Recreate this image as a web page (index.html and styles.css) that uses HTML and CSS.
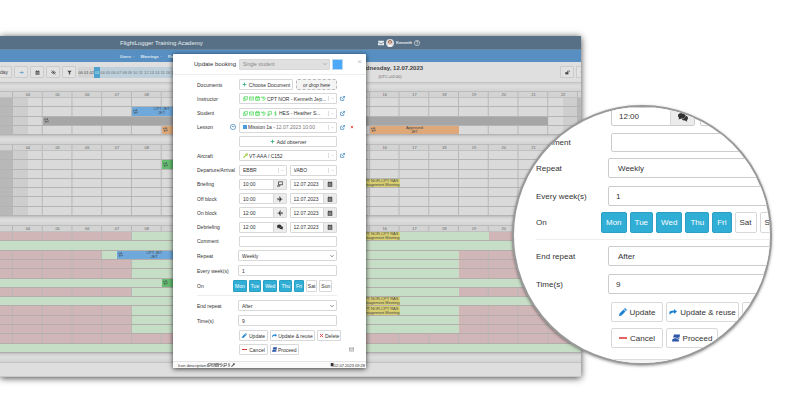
FILE: index.html
```html
<!DOCTYPE html>
<html lang="en">
<head>
    <meta charset="UTF-8">
    <meta name="viewport" content="width=device-width, initial-scale=1.0">
    <title>FlightLogger Training Academy</title>
    <link rel="stylesheet" href="styles.css">
</head>
<body>
    <!-- Icon set -->
    <svg class="icon-set" aria-hidden="true">
        <symbol id="mail" viewBox="0 0 16 16"><path d="M1 3h14v10H1zM1 4l7 5 7-5" fill="none" stroke="currentColor" stroke-width="1.8"/></symbol>
        <symbol id="mail-solid" viewBox="0 0 16 16"><path d="M0 2h16v2L8 10 0 4zM0 6l8 6 8-6v8H0z" fill="currentColor"/></symbol>
        <symbol id="help" viewBox="0 0 16 16"><circle cx="8" cy="8" r="7" fill="none" stroke="currentColor" stroke-width="1.5"/><path d="M5.500 6a2.500 2.500 0 1 1 3.500 2.300q-1 .5-1 1.700M8 11v1.800" fill="none" stroke="currentColor" stroke-width="1.6"/></symbol>
        <symbol id="arrow" viewBox="0 0 16 16"><path d="M2 8h11M9 4l4 4-4 4" fill="none" stroke="currentColor" stroke-width="2"/></symbol>
        <symbol id="calendar" viewBox="0 0 16 16"><path d="M2 3h2V1h2v2h4V1h2v2h2v12H2z" fill="currentColor"/><path d="M3 6.500h10M3 9.500h10M3 12.500h10M6 6v8M10 6v8" stroke="#eee" stroke-width=".8"/></symbol>
        <symbol id="cal-line" viewBox="0 0 16 16"><path d="M2 3h12v11H2zM2 5.500h12M5 1v3M11 1v3M5 10h6" fill="none" stroke="currentColor" stroke-width="2"/></symbol>
        <symbol id="eye" viewBox="0 0 16 16"><path d="M1 8q7-9 14 0-7 9-14 0zM2 1l12 14" fill="none" stroke="currentColor" stroke-width="1.800"/><circle cx="8" cy="8" r="2.500" fill="currentColor"/></symbol>
        <symbol id="filter" viewBox="0 0 16 16"><path d="M1 2h14L10 8v7l-4-2V8z" fill="currentColor"/></symbol>
        <symbol id="chevron" viewBox="0 0 16 16"><path d="M2 5l6 6 6-6" fill="none" stroke="currentColor" stroke-width="2.500"/></symbol>
        <symbol id="repeat-icon" viewBox="0 0 16 16"><path d="M2 8V4h10M9 1l4 3-4 3M14 8v4H4M7 9l-4 3 4 3" fill="none" stroke="currentColor" stroke-width="1.800"/></symbol>
        <symbol id="plus" viewBox="0 0 16 16"><path d="M8 2v12M2 8h12" stroke="currentColor" stroke-width="2.600"/></symbol>
        <symbol id="minus" viewBox="0 0 16 16"><path d="M0 8h16" stroke="currentColor" stroke-width="3"/></symbol>
        <symbol id="cross" viewBox="0 0 16 16"><path d="M3 3l10 10M13 3L3 13" stroke="currentColor" stroke-width="2.800"/></symbol>
        <symbol id="copy" viewBox="0 0 16 16"><path d="M5 2h10v8H5zM5 6H1v8h9v-3" fill="none" stroke="currentColor" stroke-width="1.900"/></symbol>
        <symbol id="history" viewBox="0 0 16 16"><path d="M2 2v4h5M3 6q3-5 8-3 5 3 2 8-3 5-9 2M8 5v4h3" fill="none" stroke="currentColor" stroke-width="1.800"/></symbol>
        <symbol id="board" viewBox="0 0 16 16"><path d="M4 2h11v8H4zM1 14l3-4M1 14h6l1-4" fill="none" stroke="currentColor" stroke-width="1.900"/></symbol>
        <symbol id="dollar" viewBox="0 0 16 16"><path d="M11 4q-6-3-6 1 0 2 3 3t3 3q0 4-6 1M8 1v14" fill="none" stroke="currentColor" stroke-width="1.600"/></symbol>
        <symbol id="open" viewBox="0 0 16 16"><path d="M7 4H2v10h10V9M9 1h6v6M15 1L7 9" fill="none" stroke="currentColor" stroke-width="2"/></symbol>
        <symbol id="clock" viewBox="0 0 16 16"><circle cx="8" cy="8" r="7" fill="none" stroke="currentColor" stroke-width="1.600"/><path d="M8 8L5 5M8 8l4-2" stroke="currentColor" stroke-width="1.600"/></symbol>
        <symbol id="key" viewBox="0 0 16 16"><path d="M15 2q-4-3-7 1-1 2 0 4l-7 6v2h4v-2h2v-2l3-2q4 0 5-3 1-2 0-4zm-3 1a1.500 1.500 0 1 1 0 3 1.500 1.500 0 0 1 0-3z" fill="currentColor"/></symbol>
        <symbol id="plane" viewBox="0 0 16 16"><path d="M7 7L6 1h2l3 6h3q2 1 0 2h-3l-3 6H6l1-6H4l-1 2H1l1-3-1-3h2l1 2z" fill="currentColor"/></symbol>
        <symbol id="chat" viewBox="0 0 16 16"><ellipse cx="6" cy="6" rx="6" ry="4.500" fill="currentColor"/><path d="M2 8l-1 4 5-2zM12.500 5.500q4 2 3.500 5-.5 2-2 2.500l1 2.500-4-2q-4 0-5-2.500 6 0 6.500-5.500z" fill="currentColor"/></symbol>
        <symbol id="pencil" viewBox="0 0 16 16"><path d="M1 11l8-8 4 4-8 8-5 1zM10 2l2-2 4 4-2 2z" fill="currentColor"/></symbol>
        <symbol id="share" viewBox="0 0 16 16"><path d="M10 2l6 5-6 5V9Q3 8 2 14-3 5 10 5z" fill="currentColor"/></symbol>
        <symbol id="proceed" viewBox="0 0 16 16"><path d="M4 1h12l-1.500 9-4 1 4 1-1 3H0l1-5 5-2-4-1z" fill="#2c56a8"/><path d="M1 9q5-3 7-1t7-1" fill="none" stroke="#fff" stroke-width="1.300"/></symbol>
        <symbol id="unlock" viewBox="0 0 16 16"><path d="M1 7h10v7H1z" fill="currentColor"/><path d="M8 8V3h6v4" fill="none" stroke="currentColor" stroke-width="2"/></symbol>
        <symbol id="book" viewBox="0 0 16 16"><path d="M3 0h11v16l-4-3H3z" fill="currentColor"/></symbol>
    </svg>

    <main class="app">
        <header class="topbar">
            <span class="brand">FlightLogger Training Academy</span>
            <div class="account">
                <svg class="icon mail"><use href="#mail-solid"/></svg>
                <svg class="avatar" viewBox="0 0 16 16"><circle cx="8" cy="8" r="8" fill="#d8dadb"/><path d="M4 5q4-6 8 0v3H4z" fill="#75523f"/><ellipse cx="8" cy="7" rx="3" ry="4" fill="#d9a78c"/><path d="M3 14q5-6 10 0-5 4-10 0z" fill="#f8f8f8"/></svg>
                <span>Kenneth</span>
                <svg class="icon help"><use href="#help"/></svg>
            </div>
        </header>
        <nav class="nav">
            <a href="#">Users <small>·</small></a>
            <a href="#">Warnings <small>·</small></a>
            <a href="#">Reports</a>
        </nav>

        <div class="toolbar">
            <button class="tool today">Today</button>
            <button class="tool next" aria-label="Next day"><svg class="icon"><use href="#arrow"/></svg></button>
            <button class="tool" aria-label="Calendar"><svg class="icon"><use href="#calendar"/></svg></button>
            <button class="tool" aria-label="Visibility"><svg class="icon"><use href="#eye"/></svg></button>
            <button class="tool" aria-label="Filter"><svg class="icon"><use href="#filter"/></svg></button>
            <div class="hours">
                <span class="off">00</span><span class="off">01</span><span class="off">02</span><span class="active">03</span><span>04</span><span>05</span><span>06</span><span>07</span><span>08</span><span>09</span><span>10</span><span>11</span><span>12</span><span>13</span><span>14</span><span>15</span><span>16</span><span>17</span><span>18</span><span>19</span><span>20</span><span>21</span><span>22</span><span>23</span>
            </div>
            <div class="date"><strong>Wednesday, 12.07.2023</strong><span>(UTC+02:00)</span></div>
            <button class="tool lock" aria-label="Unlock"><svg class="icon"><use href="#unlock"/></svg></button>
            <button class="tool cut" aria-label="More"><svg class="icon"><use href="#book"/></svg></button>
        </div>

        <div class="strip"></div>
        <section class="board plain bookings">
            <div class="line head"><i></i><b>04</b><b>05</b><b>06</b><b>07</b><b>08</b><b>09</b><b>10</b><b>11</b><b>12</b><b>13</b><b>14</b><b>15</b><b>16</b><b>17</b><b>18</b><b>19</b><b>20</b><b>21</b><b>22</b></div>
            <div class="line"></div>
            <div class="line"><div class="event blue from-8 to-10"><svg class="icon"><use href="#repeat-icon"/></svg><span>CPT JET<br>JET</span></div></div>
            <div class="line"><div class="event gray from-5 to-22"><svg class="icon"><use href="#repeat-icon"/></svg></div></div>
            <div class="line">
                <div class="event orange from-9 to-11"><svg class="icon"><use href="#repeat-icon"/></svg></div>
                <div class="event orange from-16 to-19"><svg class="icon"><use href="#repeat-icon"/></svg><span>Approved<br>JET</span></div>
            </div>
        </section>

        <div class="strip"></div>
        <section class="board plain students">
            <div class="line head"><i></i><b>04</b><b>05</b><b>06</b><b>07</b><b>08</b><b>09</b><b>10</b><b>11</b><b>12</b><b>13</b><b>14</b><b>15</b><b>16</b><b>17</b><b>18</b><b>19</b><b>20</b><b>21</b><b>22</b></div>
            <div class="line"></div>
            <div class="line"><div class="event green from-9 to-10"><svg class="icon"><use href="#repeat-icon"/></svg><span>JET</span></div></div>
            <div class="line"></div>
            <div class="line"><div class="event yellow from-15 to-17"><span>CPT NOR,CPT RAS<br>Management Meeting</span></div></div>
            <div class="line"></div>
            <div class="line"></div>
            <div class="line"></div>
        </section>

        <div class="strip"></div>
        <section class="board duty">
            <div class="line head"><i></i><b>04</b><b>05</b><b>06</b><b>07</b><b>08</b><b>09</b><b>10</b><b>11</b><b>12</b><b>13</b><b>14</b><b>15</b><b>16</b><b>17</b><b>18</b><b>19</b><b>20</b><b>21</b><b>22</b></div>
            <div class="line"><div class="free from-8 to-20"></div><div class="event yellow from-15 to-17"><span>CPT NOR,CPT RAS<br>Management Meeting</span></div></div>
            <div class="line"><div class="free all"></div></div>
            <div class="line"><div class="free from-7 to-19"></div><div class="event blue from-730 to-10"><svg class="icon"><use href="#repeat-icon"/></svg><span>CPT JET<br>JET</span></div></div>
            <div class="line"><div class="free from-8 to-19"></div></div>
            <div class="line"><div class="free from-8 to-19"></div></div>
            <div class="line"><div class="free all"></div><div class="event green from-9 to-10"><svg class="icon"><use href="#repeat-icon"/></svg><span>JET</span></div></div>
            <div class="line"><div class="free from-8 to-19"></div></div>
            <div class="line"><div class="free all"></div><div class="event yellow from-15 to-17"><span>CPT NOR,CPT RAS<br>Management Meeting</span></div></div>
            <div class="line"><div class="free from-8 to-19"></div><div class="event yellow from-15 to-17"><span>CPT NOR,CPT RAS<br>Management Meeting</span></div></div>
            <div class="line"><div class="free from-8 to-19"></div></div>
            <div class="line"><div class="free from-8 to-19"></div></div>
            <div class="line"></div>
            <div class="line"><div class="free all"></div></div>
        </section>
        <div class="strip"></div>
        <div class="app-foot"></div>

        <!-- Booking dialog -->
        <form class="dialog">
            <div class="dialog-head">
                <label for="kind">Update booking</label>
                <div class="field muted"><select id="kind"><option>Single student</option></select><svg class="icon"><use href="#chevron"/></svg></div>
                <button type="button" class="swatch" aria-label="Colour"></button>
                <button type="button" class="close" aria-label="Close">×</button>
            </div>

            <div class="rows">
                <div class="row">
                    <label for="doc">Documents</label>
                    <div class="control">
                        <button type="button" id="doc" class="btn choose"><svg class="icon teal"><use href="#plus"/></svg>Choose Document</button>
                        <div class="drop">or drop here</div>
                    </div>
                </div>
                <div class="row">
                    <label for="instructor">Instructor</label>
                    <div class="control"><div class="field combo">
                        <svg class="icon lime"><use href="#copy"/></svg><svg class="icon lime"><use href="#mail"/></svg><svg class="icon lime"><use href="#cal-line"/></svg><svg class="icon lime"><use href="#history"/></svg>
                        <select id="instructor"><option>CPT NOR - Kenneth Jep...</option></select><svg class="icon arrow"><use href="#chevron"/></svg>
                    </div></div>
                    <a href="#" aria-label="Open instructor"><svg class="icon"><use href="#open"/></svg></a>
                </div>
                <div class="row">
                    <label for="student">Student</label>
                    <div class="control"><div class="field combo">
                        <svg class="icon lime"><use href="#copy"/></svg><svg class="icon lime"><use href="#mail"/></svg><svg class="icon lime"><use href="#cal-line"/></svg><svg class="icon lime"><use href="#history"/></svg><svg class="icon lime"><use href="#board"/></svg><svg class="icon lime"><use href="#dollar"/></svg>
                        <select id="student"><option>HES - Heather S...</option></select><svg class="icon arrow"><use href="#chevron"/></svg>
                    </div></div>
                    <a href="#" aria-label="Open student"><svg class="icon"><use href="#open"/></svg></a>
                </div>
                <div class="row">
                    <label for="lesson" class="timed">Lesson <svg class="icon"><use href="#clock"/></svg></label>
                    <div class="control"><div class="field combo lesson">
                        <span class="dot"></span><select id="lesson"><option>Mission 1a -</option></select><span class="when">12.07.2023 10:00</span><svg class="icon arrow"><use href="#chevron"/></svg>
                    </div></div>
                    <a href="#" aria-label="Open lesson"><svg class="icon"><use href="#open"/></svg></a>
                    <button type="button" class="remove" aria-label="Remove lesson"><svg class="icon"><use href="#cross"/></svg></button>
                </div>
                <div class="row">
                    <span></span>
                    <div class="control"><button type="button" class="btn wide"><svg class="icon teal"><use href="#plus"/></svg>Add observer</button></div>
                </div>
                <div class="row">
                    <label for="aircraft">Aircraft</label>
                    <div class="control"><div class="field combo">
                        <svg class="icon olive"><use href="#key"/></svg><select id="aircraft"><option>VT-AAA / C152</option></select><svg class="icon arrow"><use href="#chevron"/></svg>
                    </div></div>
                    <a href="#" aria-label="Open aircraft"><svg class="icon"><use href="#open"/></svg></a>
                </div>
                <div class="row">
                    <label for="departure">Departure/Arrival</label>
                    <div class="control">
                        <div class="field combo"><select id="departure"><option>EBBR</option></select><svg class="icon arrow"><use href="#chevron"/></svg></div>
                        <div class="field combo"><select aria-label="Arrival"><option>VABO</option></select><svg class="icon arrow"><use href="#chevron"/></svg></div>
                    </div>
                </div>
                <div class="row">
                    <label for="briefing">Briefing</label>
                    <div class="control">
                        <div class="field"><input id="briefing" value="10:00"><span class="addon"><svg class="icon"><use href="#board"/></svg></span></div>
                        <div class="field"><input aria-label="Briefing date" value="12.07.2023"><span class="addon"><svg class="icon"><use href="#calendar"/></svg></span></div>
                    </div>
                </div>
                <div class="row">
                    <label for="offblock">Off block</label>
                    <div class="control">
                        <div class="field"><input id="offblock" value="10:00"><span class="addon"><svg class="icon"><use href="#plane"/></svg></span></div>
                        <div class="field"><input aria-label="Off block date" value="12.07.2023"><span class="addon"><svg class="icon"><use href="#calendar"/></svg></span></div>
                    </div>
                </div>
                <div class="row">
                    <label for="onblock">On block</label>
                    <div class="control">
                        <div class="field"><input id="onblock" value="12:00"><span class="addon"><svg class="icon flip"><use href="#plane"/></svg></span></div>
                        <div class="field"><input aria-label="On block date" value="12.07.2023"><span class="addon"><svg class="icon"><use href="#calendar"/></svg></span></div>
                    </div>
                </div>
                <div class="row">
                    <label for="debriefing">Debriefing</label>
                    <div class="control">
                        <div class="field"><input id="debriefing" value="12:00"><span class="addon"><svg class="icon"><use href="#chat"/></svg></span></div>
                        <div class="field"><input aria-label="Debriefing date" value="12.07.2023"><span class="addon"><svg class="icon"><use href="#calendar"/></svg></span></div>
                    </div>
                </div>
                <div class="row">
                    <label for="comment">Comment</label>
                    <div class="control"><div class="field"><input id="comment"></div></div>
                </div>
            </div>

            <div class="repeat">
                <div class="row"><label for="repeat">Repeat</label><div class="field"><select id="repeat"><option>Weekly</option></select><svg class="icon"><use href="#chevron"/></svg></div></div>
                <div class="row"><label for="every">Every week(s)</label><div class="field"><input id="every" value="1"></div></div>
                <div class="row days-row"><span>On</span>
                    <div class="days"><button type="button" class="on">Mon</button><button type="button" class="on">Tue</button><button type="button" class="on">Wed</button><button type="button" class="on">Thu</button><button type="button" class="on">Fri</button><button type="button">Sat</button><button type="button">Sun</button></div>
                </div>
                <hr>
                <div class="row"><label for="end">End repeat</label><div class="field"><select id="end"><option>After</option></select><svg class="icon"><use href="#chevron"/></svg></div></div>
                <div class="row"><label for="times">Time(s)</label><div class="field"><input id="times" value="9"></div></div>
            </div>

            <div class="actions">
                <button type="button" class="btn"><svg class="icon azure"><use href="#pencil"/></svg>Update</button>
                <button type="button" class="btn"><svg class="icon azure"><use href="#share"/></svg>Update &amp; reuse</button>
                <button type="button" class="btn"><svg class="icon red"><use href="#cross"/></svg>Delete</button>
            </div>
            <div class="actions">
                <button type="button" class="btn"><svg class="icon red"><use href="#minus"/></svg>Cancel</button>
                <button type="button" class="btn"><svg class="icon"><use href="#proceed"/></svg>Proceed</button>
                <svg class="icon notify"><use href="#mail"/></svg>
            </div>
            <div class="dialog-foot">
                <span>Icon description:</span>
                <svg class="icon"><use href="#copy"/></svg><svg class="icon"><use href="#mail"/></svg><svg class="icon"><use href="#cal-line"/></svg><svg class="icon"><use href="#history"/></svg><svg class="icon"><use href="#board"/></svg><svg class="icon"><use href="#dollar"/></svg><svg class="icon"><use href="#key"/></svg>
                <span class="stamp"><svg class="icon"><use href="#book"/></svg>12.07.2023 09:28</span>
            </div>
        </form>
    </main>

    <!-- Magnified part of the dialog -->
    <aside class="lens">
        <form class="lens-form">
            <div class="row top">
                <span></span>
                <div class="control">
                    <div class="field"><input aria-label="Debriefing time" value="12:00"><span class="addon"><svg class="icon"><use href="#chat"/></svg></span></div>
                    <div class="field"><input aria-label="Debriefing day"></div>
                </div>
            </div>
            <div class="row note"><label for="l-comment">Comment</label><div class="control"><div class="field"><input id="l-comment"></div></div></div>
            <div class="row"><label for="l-repeat">Repeat</label><div class="field"><select id="l-repeat"><option>Weekly</option></select></div></div>
            <div class="row every"><label for="l-every">Every week(s)</label><div class="field"><input id="l-every" value="1"></div></div>
            <div class="row days-row"><span>On</span>
                <div class="days"><button type="button" class="on">Mon</button><button type="button" class="on">Tue</button><button type="button" class="on">Wed</button><button type="button" class="on">Thu</button><button type="button" class="on">Fri</button><button type="button">Sat</button><button type="button">Sun</button></div>
            </div>
            <hr>
            <div class="row"><label for="l-end">End repeat</label><div class="field"><select id="l-end"><option>After</option></select></div></div>
            <div class="row"><label for="l-times">Time(s)</label><div class="field"><input id="l-times" value="9"></div></div>
            <div class="actions">
                <button type="button" class="btn"><svg class="icon azure"><use href="#pencil"/></svg>Update</button>
                <button type="button" class="btn"><svg class="icon azure"><use href="#share"/></svg>Update &amp; reuse</button>
                <button type="button" class="btn" aria-label="Delete"></button>
            </div>
            <div class="actions">
                <button type="button" class="btn"><svg class="icon red"><use href="#minus"/></svg>Cancel</button>
                <button type="button" class="btn"><svg class="icon"><use href="#proceed"/></svg>Proceed</button>
            </div>
            <div class="lens-foot"></div>
        </form>
    </aside>
</body>
</html>
```
FILE: styles.css
```css
* {
    box-sizing: border-box;
}
body {
    margin: 0;
    padding: 36px 219px 36px 0;
    background: #fff;
    color: #333;
    font-family: "Liberation Sans", Arial, sans-serif;
    font-size: 4px;
    position: relative;
    overflow: hidden;
}
button, input, select {
    font: inherit;
    color: inherit;
    margin: 0;
    padding: 0;
    border: 0;
    background: none;
    appearance: none;
    outline: none;
    min-width: 0;
}
button {
    cursor: pointer;
    white-space: nowrap;
}
a {
    color: inherit;
    text-decoration: none;
}
.icon-set {
    position: absolute;
    width: 0;
    height: 0;
}
.icon {
    width: 5px;
    height: 5px;
    flex: none;
    display: block;
}

/* App window */
.app {
    position: relative;
    background: #dcdcdc;
    box-shadow: 0 1px 7px rgba(0, 0, 0, 0.75);
}
.topbar {
    height: 13px;
    padding-left: 120px;
    display: flex;
    align-items: center;
    background: #577085;
    color: #fff;
}
.brand {
    font-size: 6px;
    width: 258px;
    color: #e8edf0;
}
.account {
    display: flex;
    align-items: center;
    gap: 2px;
    font-weight: bold;
    color: #e8edf0;
}
.account .icon {
    width: 6px;
    height: 6px;
}
.avatar {
    width: 8px;
    height: 8px;
}
.nav {
    height: 13px;
    padding-left: 120px;
    display: flex;
    align-items: center;
    gap: 6px;
    background: #588fc2;
    border-top: 1px solid #6689a6;
    color: #dfe9f2;
    font-weight: bold;
}
.nav small {
    font-size: 4px;
    margin-left: 1px;
}
.toolbar {
    height: 20px;
    display: flex;
    align-items: center;
    gap: 2px;
    overflow: hidden;
    background: #dfdfdf;
}
.tool {
    width: 14px;
    height: 12px;
    border: 1px solid #cbcbcb;
    border-radius: 1px;
    background: #e2e2e2;
    color: #444;
    display: flex;
    align-items: center;
    justify-content: center;
    flex: none;
}
.today {
    width: 12px;
    border-left: 0;
    justify-content: flex-end;
    padding-right: 3px;
    font-size: 5px;
}
.next {
    color: #2e8bc9;
}
.hours {
    width: 131px;
    height: 11px;
    display: grid;
    grid-template-columns: repeat(24, 1fr);
    border-radius: 2px;
    overflow: hidden;
    background: #bfd0da;
    color: #65727b;
    flex: none;
}
.hours span {
    display: flex;
    align-items: center;
    justify-content: center;
}
.hours .off {
    background: #d4d4d4;
    color: #444;
}
.hours .active {
    background: #4da3cd;
    color: #cfe6f2;
}
.date {
    margin-left: 145px;
    width: 68px;
    flex: none;
    display: flex;
    flex-direction: column;
    align-items: center;
    gap: 2px;
    white-space: nowrap;
    line-height: 5px;
    color: #666;
}
.date strong {
    font-size: 6px;
    line-height: 7px;
    color: #444;
}
.lock {
    margin-left: auto;
}
.cut {
    width: 5px;
    border-right: 0;
    border-radius: 1px 0 0 1px;
    overflow: hidden;
    justify-content: flex-start;
    padding-left: 3px;
}
.strip {
    height: 9px;
    background: linear-gradient(#cfcfcf, #dedede 40%, #d2d2d2);
    border-top: 1px solid #c3c3c3;
}

/* Schedule boards */
.board {
    display: grid;
    grid-template-rows: 7px;
    grid-auto-rows: 1fr;
    background: #dadada;
}
.bookings {
    height: 44px;
}
.students {
    height: 72px;
}
.duty {
    height: 128px;
}
.line {
    display: grid;
    grid-template-columns: 13px repeat(38, 1fr) 3px;
    grid-template-rows: 1fr;
    min-height: 0;
    border-bottom: 1px solid #b4b4b4;
    background: linear-gradient(to right, #b7b7b7 1px, transparent 1px) 12px 0 / calc((100% - 16px) / 19) 100%;
}
.plain {
    background: linear-gradient(to right, #b8b8b8 13px, #cecece 13px, #cecece 28px, transparent 28px),
        linear-gradient(to left, #b8b8b8 3px, #cecece 3px, #cecece 18px, #dadada 18px);
}
.duty .line {
    background-color: #d1b6b7;
    border-bottom-color: #b3aeab;
}
.board .head {
    background-color: #d3d3d3;
    color: #666;
    border-top: 1px solid #bcbcbc;
    border-bottom: 1px solid #c0c0c0;
}
.head b {
    grid-column: span 2;
    font-weight: normal;
    text-align: center;
    line-height: 5px;
}
.free {
    grid-row: 1;
    background: #c6ddc6;
}
.all {
    grid-column: 1 / -1;
}
.event {
    grid-row: 1;
    position: relative;
    min-width: 0;
    display: flex;
    align-items: center;
    justify-content: center;
    text-align: center;
    line-height: 4px;
    white-space: nowrap;
    overflow: hidden;
    color: #3f4a52;
}
.event .icon {
    position: absolute;
    left: 1px;
    width: 5px;
    height: 5px;
}
.blue { background: #6fa9dc; }
.gray { background: #a6a6a6; border-radius: 0 1px 1px 0; }
.orange { background: #dfa878; border-radius: 1px; }
.green { background: #66bd70; }
.yellow { background: #d9cf70; justify-content: flex-end; }
.from-5 { grid-column-start: 4; }
.from-7 { grid-column-start: 8; }
.from-730 { grid-column-start: 9; }
.from-8 { grid-column-start: 10; }
.from-9 { grid-column-start: 12; }
.from-15 { grid-column-start: 24; }
.from-16 { grid-column-start: 26; }
.to-10 { grid-column-end: 14; }
.to-11 { grid-column-end: 16; }
.to-17 { grid-column-end: 28; }
.to-19 { grid-column-end: 32; }
.to-20 { grid-column-end: 34; }
.to-22 { grid-column-end: 38; }
.app-foot {
    height: 15px;
    background: #dedede;
    border-top: 1px solid #c2c2c2;
    border-bottom: 1px solid #c9c9c9;
}

/* Form parts, shared by dialog and lens */
.row {
    display: flex;
    align-items: center;
}
.row > label, .row > span {
    flex: none;
}
.control {
    display: flex;
}
.field {
    flex: 1;
    min-width: 0;
    position: relative;
    display: flex;
    align-items: center;
    border: 1px solid #d8d8d8;
    border-radius: 1px;
    background: #fff;
}
.field select, .field input {
    flex: 1;
    height: 100%;
}
.addon {
    align-self: stretch;
    display: flex;
    align-items: center;
    justify-content: center;
    background: #ececec;
    border-left: 1px solid #d8d8d8;
}
.flip {
    transform: scaleX(-1);
}
.btn {
    display: flex;
    align-items: center;
    justify-content: center;
    border: 1px solid #d8d8d8;
    border-radius: 1px;
    background: #fff;
}
.days, .actions {
    display: flex;
}
.days button {
    border: 1px solid #d8d8d8;
    border-radius: 1px;
}
.days .on {
    background: #31aed5;
    border-color: #2aa0c5;
    color: #fff;
}
hr {
    margin: 0;
    border: 0;
    border-top: 1px solid #eee;
}
.teal { color: #2fae7c; }
.lime { color: #2fd03c; }
.olive { color: #8fc31f; }
.azure { color: #1c82d0; }
.red { color: #d93030; }

/* Dialog */
.dialog {
    position: absolute;
    top: 18px;
    left: 173px;
    width: 193px;
    background: #fff;
    border-radius: 1px;
    box-shadow: 0 1px 5px rgba(0, 0, 0, 0.75);
    font-size: 5px;
}
.dialog-head {
    height: 21px;
    padding: 0 4px 0 21px;
    display: flex;
    align-items: center;
    gap: 2px;
    border-bottom: 1px solid #eee;
}
.dialog-head label {
    width: 43px;
    font-size: 6px;
    white-space: nowrap;
}
.dialog-head .field {
    flex: 0 0 91px;
    height: 11px;
    padding-right: 3px;
}
.muted {
    background: #e0e0e0;
    color: #888;
}
.swatch {
    width: 11px;
    height: 11px;
    border: 1px solid #bcd9ef;
    background: #4ca8f8;
}
.close {
    margin-left: auto;
    align-self: flex-start;
    font-size: 8px;
    line-height: 15px;
    color: #bbb;
}
.rows {
    height: 173px;
    padding: 4px 0 1px;
    display: flex;
    flex-direction: column;
    justify-content: space-between;
}
.dialog .row {
    padding-left: 24px;
    height: 11px;
}
.dialog .row > label, .dialog .row > span {
    width: 42px;
}
.dialog .control {
    width: 98px;
    height: 11px;
    gap: 3px;
    margin-right: 3px;
}
.dialog .field input, .dialog .field select {
    padding-left: 3px;
}
.dialog-head .field .icon, .repeat .field .icon {
    position: absolute;
    right: 2px;
    width: 4px;
    height: 4px;
}
.choose {
    width: 54px;
}
.wide {
    width: 100%;
}
.dialog .btn {
    gap: 2px;
}
.drop {
    flex: 1;
    display: flex;
    align-items: center;
    justify-content: center;
    border: 1px dashed #bbb;
    border-radius: 2px;
    background: #f4f4f4;
    font-style: italic;
    white-space: nowrap;
}
.dialog .combo {
    padding-left: 3px;
    gap: 1px;
}
.dialog .combo select {
    padding-left: 0;
}
.combo .arrow {
    width: 8px;
    height: 5px;
    padding: 1px 2px;
    border-left: 1px solid #ddd;
    color: #bbb;
}
.dialog .lesson select {
    flex: none;
}
.dot {
    width: 4px;
    height: 4px;
    background: #4a9ae0;
}
.when {
    flex: 1;
    color: #777;
    white-space: nowrap;
}
.timed {
    display: flex;
    justify-content: space-between;
    align-items: center;
    padding-right: 3px;
}
.timed .icon {
    width: 6px;
    height: 6px;
}
.timed .icon, .row > a {
    color: #2474bd;
}
.remove {
    margin-left: 5px;
    color: #e22;
}
.remove .icon {
    width: 4px;
    height: 4px;
}
.dialog .addon {
    width: 13px;
}
.dialog .addon .icon {
    width: 6px;
    height: 6px;
}
.repeat {
    display: grid;
    gap: 4px;
    padding-top: 2px;
}
.repeat .field {
    height: 11px;
    flex: 0 0 99px;
}
.dialog .repeat .row > label, .dialog .repeat .row > span {
    width: 41px;
}
.repeat hr {
    margin: 0 29px 0 24px;
}
.dialog .repeat .days-row > span {
    width: 36px;
}
.dialog .days {
    gap: 2px;
    height: 12px;
}
.dialog .days button {
    padding: 0 1px;
}
.dialog .actions {
    gap: 2px;
    padding: 4px 12px 0 66px;
}
.dialog .actions + .actions {
    padding-top: 3px;
}
.dialog .actions .btn {
    height: 11px;
    padding: 0 2px;
}
.dialog .actions .btn:first-child {
    min-width: 29px;
}
.dialog .actions .btn + .btn {
    gap: 1px;
    padding: 0 1px;
}
.notify {
    margin-left: auto;
    align-self: center;
    color: #777;
}
.dialog-foot {
    margin-top: 6px;
    height: 7px;
    padding: 0 1px 0 5px;
    display: flex;
    align-items: center;
    border-top: 1px solid #e4e4e4;
    background: #fafafa;
    font-size: 4px;
    white-space: nowrap;
}
.dialog-foot .icon {
    width: 4px;
    height: 4px;
}
.stamp {
    margin-left: auto;
    display: flex;
    align-items: center;
}

/* Lens */
.lens {
    position: absolute;
    top: 105px;
    right: 28px;
    width: 260px;
    height: 260px;
    border-radius: 50%;
    border: 2px solid #999;
    background: #fff;
    overflow: hidden;
    font-size: 8px;
    box-shadow: 0 1px 3px rgba(0, 0, 0, 0.4);
}
.lens-form {
    width: 280px;
}
.lens .row {
    padding-left: 22px;
    height: 20px;
    margin-bottom: 8px;
}
.lens .row > label, .lens .row > span {
    width: 72px;
}
.lens .field {
    height: 100%;
    border-radius: 2px;
    border-color: #ccc;
}
.lens .field input {
    padding-left: 7px;
}
.lens .field select {
    padding-left: 9px;
}
.lens .control {
    flex: 1;
    height: 100%;
    gap: 5px;
    margin-left: 3px;
}
.lens .addon {
    width: 24px;
}
.lens .addon .icon {
    width: 10px;
    height: 10px;
}
.lens .top {
    height: 19px;
    margin-bottom: 7px;
}
.lens .top .field:first-child {
    flex: 0 0 84px;
}
.lens .note {
    height: 19px;
    margin-bottom: 6px;
}
.lens .every {
    margin-bottom: 6px;
}
.lens .days-row {
    height: 21px;
    margin-bottom: 6px;
}
.lens .days-row > span {
    width: 65px;
}
.lens .days {
    height: 100%;
    gap: 3px;
}
.lens .days button {
    padding: 0 4px;
    border-radius: 2px;
}
.lens hr {
    margin: 0 0 6px 22px;
}
.lens .actions {
    gap: 3px;
    padding-left: 97px;
    margin-bottom: 6px;
}
.lens .btn {
    height: 20px;
    min-width: 52px;
    padding: 0 4px;
    gap: 3px;
    border-radius: 2px;
}
.lens .btn .icon {
    width: 8px;
    height: 8px;
}
.lens-foot {
    margin-top: 11px;
    height: 20px;
    border-top: 1px solid #ddd;
    background: #f4f4f4;
}
```
